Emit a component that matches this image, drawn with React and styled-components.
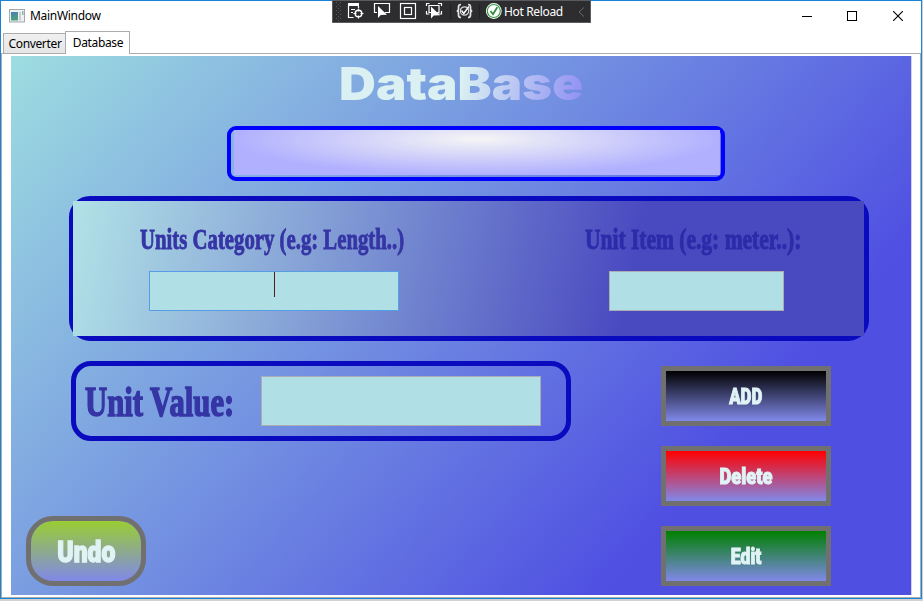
import React from "react";
import styled, { createGlobalStyle } from "styled-components";

const Global = createGlobalStyle`
  * { box-sizing: border-box; }
  html, body { margin: 0; padding: 0; background: #d2d2d2; overflow: hidden; }
`;

const ui = `"Noto Sans", "Open Sans", sans-serif`;

const Window = styled.div`
  position: relative;
  width: 922px;
  height: 599px;
  background: #fff;
  border: 1px solid #1883d7;
  display: flex;
  flex-direction: column;
  font-family: ${ui};
`;

const TitleBar = styled.header`
  height: 30px;
  flex: none;
  display: flex;
  align-items: center;
  padding-left: 8px;
`;

const WindowTitle = styled.div`
  flex: 1;
  margin-left: 5px;
  font-size: 12px;
  line-height: 16px;
  letter-spacing: -0.3px;
  color: #000;
`;

const CaptionButton = styled.div`
  width: 46px;
  height: 30px;
  display: grid;
  place-items: center;
  svg { display: block; margin-top: -1px; }
`;

const CaptionButtons = styled.div`
  display: flex;
`;

const DebugBar = styled.div`
  position: absolute;
  left: 331px;
  top: -1px;
  width: 259px;
  height: 23px;
  background: #2d2d30;
  border: 1px solid #5c5c60;
  display: flex;
  align-items: center;
`;

const DebugText = styled.span`
  width: 62px;
  font-size: 12px;
  line-height: 16px;
  letter-spacing: -0.35px;
  color: #fff;
  white-space: nowrap;
`;

const TabStrip = styled.nav`
  height: 23px;
  flex: none;
  display: flex;
  align-items: flex-end;
  padding-left: 2px;
  border-bottom: 1px solid #acacac;
`;

const Tab = styled.div`
  width: ${(p) => p.$width}px;
  height: ${(p) => (p.$active ? 23 : 20)}px;
  margin-bottom: ${(p) => (p.$active ? -1 : 0)}px;
  padding: ${(p) => (p.$active ? 3 : 2)}px 0 0 1px;
  border: 1px solid #acacac;
  border-bottom: 0;
  margin-right: -1px;
  background: ${(p) => (p.$active ? "#fff" : "linear-gradient(#f0f0f0, #e5e5e5)")};
  z-index: ${(p) => (p.$active ? 1 : 0)};
  font-size: 12px;
  line-height: 16px;
  letter-spacing: -0.35px;
  text-align: center;
  white-space: nowrap;
  color: #000;
`;

const TabBody = styled.main`
  flex: 1;
  border: solid #acacac;
  border-width: 0 1px 1px 1px;
  padding: 2px 0 0 9px;
`;

const Page = styled.section`
  width: 900px;
  height: 539px;
  display: flex;
  flex-direction: column;
  background: linear-gradient(131.3deg, #9dddE0 0%, #4f4fe2 77.5%);
  box-shadow: 1px 0 0 #d0d0f4;
`;

const Heading = styled.h1`
  margin: 0 0 0 328px;
  height: 70px;
  padding-top: 1px;
  width: 260px;
`;

const HeadingText = styled.span`
  display: block;
  width: max-content;
  font: 900 45px/54px Inter, sans-serif;
  background: linear-gradient(100deg, #daf0f2 50%, #9292f4 98%);
  background-clip: text;
  color: transparent;
  transform: scaleX(1.135);
  transform-origin: 0 50%;
`;

const DisplayBox = styled.div`
  width: 498px;
  height: 55px;
  margin-left: 216px;
  flex: none;
  border: 4px solid #0000ff;
  border-radius: 9px;
  padding: 0 1px 2px 3px;
`;

const DisplayFill = styled.div`
  height: 100%;
  background: radial-gradient(ellipse 243px 36px at 50% 9px, #f5f5f5, #b0b0ff);
`;

const CategoryPanel = styled.div`
  width: 800px;
  height: 145px;
  flex: none;
  margin: 15px 0 0 58px;
  border: 5px solid #0a0abe;
  border-radius: 21px;
  display: flex;
`;

const CategoryFill = styled.div`
  width: 791px;
  margin-left: -1px;
  flex: none;
  display: flex;
  background: linear-gradient(101.500deg, #b0e0e6 1%, #4949c0 70.500%);
`;

const Field = styled.div`
  display: flex;
  flex-direction: column;
  gap: 17px;
  padding: 23px 0 0 ${(p) => p.$left}px;
  width: ${(p) => p.$width}px;
`;

const Label = styled.div`
  height: ${(p) => p.$height}px;
  margin-left: ${(p) => p.$shift || 0}px;
  span {
    display: block;
    width: max-content;
    font: 700 ${(p) => p.$size}px/${(p) => p.$height}px "Liberation Serif", serif;
    -webkit-text-stroke: ${(p) => p.$stroke}px currentColor;
    color: ${(p) => p.$color};
    transform: scaleX(${(p) => p.$scale});
    transform-origin: 0 50%;
  }
`;

const Input = styled.div`
  width: ${(p) => p.$width}px;
  height: ${(p) => p.$height}px;
  background: #b0e0e6;
  border: 1px solid ${(p) => (p.$focus ? "#569de5" : "#abadb3")};
  display: flex;
  justify-content: center;
`;

const Caret = styled.i`
  width: 1px;
  height: 25px;
  background: #4f1f19;
`;

const Lower = styled.div`
  display: flex;
  justify-content: space-between;
  padding: 20px 80px 0 15px;
`;

const LeftColumn = styled.div`
  display: flex;
  flex-direction: column;
  justify-content: space-between;
  height: 225px;
`;

const ValuePanel = styled.div`
  width: 500px;
  height: 80px;
  margin-left: 45px;
  border: 5px solid #0a0abe;
  border-radius: 20px;
  display: flex;
  align-items: center;
  padding-left: 9px;
`;

const ValueLabelSlot = styled.div`
  width: 176px;
  padding-top: 1px;
`;

const ButtonColumn = styled.div`
  display: flex;
  flex-direction: column;
  gap: 20px;
  padding-top: 5px;
`;

const Button = styled.button`
  width: ${(p) => (p.$round ? 120 : 170)}px;
  height: ${(p) => (p.$round ? 70 : 60)}px;
  padding: 2px 0 0;
  border: 5px solid #707070;
  border-radius: ${(p) => (p.$round ? 27 : 0)}px;
  background: linear-gradient(${(p) => p.$from}, #8088e8) padding-box;
  display: grid;
  place-items: center;
  color: #e0f3f5;
  span {
    display: block;
    font: 900 ${(p) => (p.$round ? 30 : 22)}px/1 Roboto, sans-serif;
    -webkit-text-stroke: ${(p) => (p.$round ? 1.4 : 1)}px currentColor;
    transform: scaleX(${(p) => p.$scale});
  }
`;

const DebugIcons = () => (
  <svg width="171" height="21" viewBox="333 1 171 21" fill="none" stroke="#fff" strokeWidth="1.2">
    <g fill="#5c5c60" stroke="none">
      {[2, 6, 10, 14, 18].map((y) => (
        <g key={y}>
          <rect x="336" y={y} width="1" height="1" />
          <rect x="340" y={y} width="1" height="1" />
          <rect x="338" y={y + 2} width="1" height="1" />
        </g>
      ))}
    </g>
    <path d="M348 4.500h11" strokeWidth="3" />
    <path d="M348.500 4v13.500h5M358.500 6v2M351 9.500h4M351 12.500h2" />
    <circle cx="358.500" cy="13.500" r="3.300" strokeWidth="1.500" />
    <path d="M358.500 8.500v3M358.500 15.500v3M353.500 13.500h3M360.500 13.500h3" />
    <path d="M377 12.500h-2.500v-9h15v9H385" />
    <path d="M378 6v12l2.800-3 6.200-.2z" fill="#fff" stroke="none" />
    <rect x="400.500" y="3.500" width="15" height="15" />
    <rect x="404.500" y="7.500" width="7" height="7" />
    <path d="M426.500 6V3.500h3M438 3.500h3.500V6M426.500 11v3h3M441.500 11v3H438" />
    <path d="M431 12.500h-2v-7h10v7h-2" />
    <path d="M431 6.500v12l2.800-3 6.200-.2z" fill="#fff" stroke="none" />
    <path d="M450.500 4v15M479.500 4v15" stroke="#222226" />
    <path d="M461 4.500c-2 0-2.500.8-2.500 2.500v2c0 1.200-.5 2-1.800 2 1.300 0 1.800.8 1.800 2v2c0 1.700.5 2.500 2.500 2.500M468 4.500c2 0 2.500.8 2.500 2.500v2c0 1.200.5 2 1.800 2-1.300 0-1.800.8-1.800 2v2c0 1.700-.5 2.500-2.500 2.500" strokeWidth="1.700" stroke="#e4e4e4" />
    <circle cx="464.500" cy="11" r="4.200" stroke="#d8d8d8" />
    <path d="M461.500 10.500l2.300 3 5-7" strokeWidth="1.500" />
    <circle cx="493.800" cy="11" r="7.900" fill="#fff" stroke="none" />
    <circle cx="493.800" cy="11" r="6.500" stroke="#3a9a43" />
    <path d="M490.500 11l2.500 3.300 4.300-7" stroke="#2f8a38" strokeWidth="1.700" />
  </svg>
);

const AppIcon = () => (
  <svg width="16" height="14" viewBox="0 0 16 14">
    <defs>
      <linearGradient id="pane" x2="0.3" y2="1">
        <stop stopColor="#4a7fb5" />
        <stop offset="1" stopColor="#4fa07c" />
      </linearGradient>
    </defs>
    <rect x=".5" y=".5" width="15" height="12.500" fill="#eef0f2" stroke="#a5a8ac" />
    <rect x="2" y="3" width="7" height="8.500" fill="url(#pane)" />
    <rect x="10" y="3" width="2" height="8.500" fill="#c9ced4" />
    <rect x="13" y="2" width="1.500" height="4" fill="#8fb5a5" />
  </svg>
);

const actions = [
  { name: "ADD", from: "#000000", scale: 0.76 },
  { name: "Delete", from: "#ff0000", scale: 0.83 },
  { name: "Edit", from: "#008000", scale: 0.8 },
];

export default function App() {
  return (
    <>
      <Global />
      <Window>
        <TitleBar>
          <AppIcon />
          <WindowTitle>MainWindow</WindowTitle>
          <CaptionButtons>
            <CaptionButton>
              <svg width="12" height="10"><path d="M2 5.500h10" stroke="#000" /></svg>
            </CaptionButton>
            <CaptionButton>
              <svg width="10" height="10"><rect x=".5" y=".5" width="9" height="9" fill="none" stroke="#000" /></svg>
            </CaptionButton>
            <CaptionButton>
              <svg width="10" height="10"><path d="M0 0l10 10M10 0L0 10" stroke="#000" strokeWidth="1.100" /></svg>
            </CaptionButton>
          </CaptionButtons>
        </TitleBar>
        <TabStrip>
          <Tab $width={63}>Converter</Tab>
          <Tab $width={65} $active>Database</Tab>
        </TabStrip>
        <TabBody>
          <Page>
            <Heading><HeadingText>DataBase</HeadingText></Heading>
            <DisplayBox><DisplayFill /></DisplayBox>
            <CategoryPanel>
              <CategoryFill>
                <Field $left={76} $width={536}>
                  <Label $height={30} $size={29} $stroke={0.9} $color="#3535a5" $scale={0.716} $shift={-9}>
                    <span>Units Category (e.g: Length..)</span>
                  </Label>
                  <Input $width={250} $height={40} $focus><Caret /></Input>
                </Field>
                <Field $left={0} $width={200}>
                  <Label $height={30} $size={29} $stroke={0.9} $color="#2c2caa" $scale={0.741} $shift={-24}>
                    <span>Unit Item (e.g: meter..):</span>
                  </Label>
                  <Input $width={175} $height={40} />
                </Field>
              </CategoryFill>
            </CategoryPanel>
            <Lower>
              <LeftColumn>
                <ValuePanel>
                  <ValueLabelSlot>
                    <Label $height={50} $size={43} $stroke={1.6} $color="#3535a5" $scale={0.714}>
                      <span>Unit Value:</span>
                    </Label>
                  </ValueLabelSlot>
                  <Input $width={280} $height={50} />
                </ValuePanel>
                <Button $round $from="#9acd32" $scale={0.82}><span>Undo</span></Button>
              </LeftColumn>
              <ButtonColumn>
                {actions.map((a) => (
                  <Button key={a.name} $from={a.from} $scale={a.scale}><span>{a.name}</span></Button>
                ))}
              </ButtonColumn>
            </Lower>
          </Page>
        </TabBody>
        <DebugBar>
          <DebugIcons />
          <DebugText>Hot Reload</DebugText>
          <svg width="22" height="12"><path d="M18 1.500l-5 4.500 5 4.500" fill="none" stroke="#69696d" /></svg>
        </DebugBar>
      </Window>
    </>
  );
}
